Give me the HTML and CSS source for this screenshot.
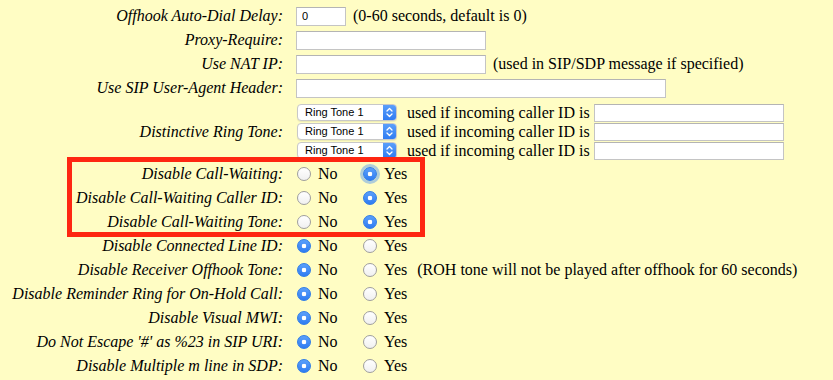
FILE: index.html
```html
<!DOCTYPE html>
<html>
<head>
<meta charset="utf-8">
<link rel="stylesheet" href="styles.css">
</head>
<body>
<div class="page">
  <div class="form">
    <div class="row">
      <div class="label">Offhook Auto-Dial Delay:</div>
      <div class="value"><input class="txt w50" type="text" value="0"><span class="note">(0-60 seconds, default is 0)</span></div>
    </div>
    <div class="row">
      <div class="label">Proxy-Require:</div>
      <div class="value"><input class="txt w190" type="text"></div>
    </div>
    <div class="row">
      <div class="label">Use NAT IP:</div>
      <div class="value"><input class="txt w190" type="text"><span class="note">(used in SIP/SDP message if specified)</span></div>
    </div>
    <div class="row">
      <div class="label">Use SIP User-Agent Header:</div>
      <div class="value"><input class="txt w370" type="text"></div>
    </div>
    <div class="row ring">
      <div class="label">Distinctive Ring Tone:</div>
      <div class="value stack">
        <div class="sub">
          <span class="select"><span class="sel-text">Ring Tone 1</span><span class="sel-btn"><svg width="7" height="11" viewBox="0 0 7 11"><path d="M1 4 L3.5 1.5 L6 4 M1 7 L3.5 9.5 L6 7" fill="none" stroke="#fff" stroke-width="1.3" stroke-linecap="round" stroke-linejoin="round"/></svg></span></span>
          <span class="cid">used if incoming caller ID is</span><input class="txt w190 short" type="text">
        </div>
        <div class="sub">
          <span class="select"><span class="sel-text">Ring Tone 1</span><span class="sel-btn"><svg width="7" height="11" viewBox="0 0 7 11"><path d="M1 4 L3.5 1.5 L6 4 M1 7 L3.5 9.5 L6 7" fill="none" stroke="#fff" stroke-width="1.3" stroke-linecap="round" stroke-linejoin="round"/></svg></span></span>
          <span class="cid">used if incoming caller ID is</span><input class="txt w190 short" type="text">
        </div>
        <div class="sub">
          <span class="select"><span class="sel-text">Ring Tone 1</span><span class="sel-btn"><svg width="7" height="11" viewBox="0 0 7 11"><path d="M1 4 L3.5 1.5 L6 4 M1 7 L3.5 9.5 L6 7" fill="none" stroke="#fff" stroke-width="1.3" stroke-linecap="round" stroke-linejoin="round"/></svg></span></span>
          <span class="cid">used if incoming caller ID is</span><input class="txt w190 short" type="text">
        </div>
      </div>
    </div>
    <div class="row radios-first">
      <div class="label">Disable Call-Waiting:</div>
      <div class="value"><label class="opt"><span class="radio"></span>No</label><label class="opt"><span class="radio on focus"></span>Yes</label></div>
    </div>
    <div class="row">
      <div class="label">Disable Call-Waiting Caller ID:</div>
      <div class="value"><label class="opt"><span class="radio"></span>No</label><label class="opt"><span class="radio on"></span>Yes</label></div>
    </div>
    <div class="row">
      <div class="label">Disable Call-Waiting Tone:</div>
      <div class="value"><label class="opt"><span class="radio"></span>No</label><label class="opt"><span class="radio on"></span>Yes</label></div>
    </div>
    <div class="row">
      <div class="label">Disable Connected Line ID:</div>
      <div class="value"><label class="opt"><span class="radio on"></span>No</label><label class="opt"><span class="radio"></span>Yes</label></div>
    </div>
    <div class="row">
      <div class="label">Disable Receiver Offhook Tone:</div>
      <div class="value"><label class="opt"><span class="radio on"></span>No</label><label class="opt"><span class="radio"></span>Yes</label><span class="note roh">(ROH tone will not be played after offhook for 60 seconds)</span></div>
    </div>
    <div class="row">
      <div class="label">Disable Reminder Ring for On-Hold Call:</div>
      <div class="value"><label class="opt"><span class="radio on"></span>No</label><label class="opt"><span class="radio"></span>Yes</label></div>
    </div>
    <div class="row">
      <div class="label">Disable Visual MWI:</div>
      <div class="value"><label class="opt"><span class="radio on"></span>No</label><label class="opt"><span class="radio"></span>Yes</label></div>
    </div>
    <div class="row">
      <div class="label">Do Not Escape '#' as %23 in SIP URI:</div>
      <div class="value"><label class="opt"><span class="radio on"></span>No</label><label class="opt"><span class="radio"></span>Yes</label></div>
    </div>
    <div class="row">
      <div class="label">Disable Multiple m line in SDP:</div>
      <div class="value"><label class="opt"><span class="radio on"></span>No</label><label class="opt"><span class="radio"></span>Yes</label></div>
    </div>
  </div>
  <div class="annot"></div>
</div>
</body>
</html>
```

FILE: styles.css
```css
html, body {
  margin: 0;
  padding: 0;
  background: #fffdc4;
}
body {
  font-family: "Liberation Serif", "Times New Roman", serif;
  font-size: 16px;
  color: #000;
}
.page {
  position: relative;
  width: 833px;
  height: 380px;
  overflow: hidden;
}
.form {
  padding-top: 4px;
  display: flex;
  flex-direction: column;
}
.row {
  display: grid;
  grid-template-columns: 283px 1fr;
  column-gap: 13px;
  height: 24px;
  align-items: center;
}
.label {
  font-style: italic;
  text-align: right;
  white-space: nowrap;
  line-height: 18px;
}
.value {
  display: flex;
  align-items: center;
  white-space: nowrap;
  line-height: 18px;
}
.txt {
  box-sizing: border-box;
  height: 19px;
  margin: 0;
  padding: 0 0 0 5px;
  border: 1px solid #c4c4c4;
  border-top-color: #b4b4b4;
  background: #fff;
  font-family: "Liberation Sans", Arial, sans-serif;
  font-size: 11px;
  color: #000;
  outline: none;
}
.txt.short { height: 18px; }
.w50 { width: 50px; }
.w190 { width: 190px; }
.w370 { width: 370px; }
.note { margin-left: 7px; }
.note.roh { margin-left: 10px; }

.ring {
  height: 57px;
  margin-top: 3px;
  margin-bottom: 2px;
}
.stack {
  flex-direction: column;
  align-items: flex-start;
}
.sub {
  height: 19px;
  display: flex;
  align-items: center;
}
.select {
  box-sizing: border-box;
  display: inline-flex;
  align-items: stretch;
  width: 100px;
  height: 17px;
  margin-left: 1px;
  border: 1px solid #c8c8c8;
  border-radius: 4px;
  background: #fff;
  box-shadow: 0 1px 1px rgba(0,0,0,0.08);
  overflow: hidden;
}
.sel-text {
  flex: 1;
  padding-left: 7px;
  font-family: "Liberation Sans", Arial, sans-serif;
  font-size: 11px;
  line-height: 15px;
}
.sel-btn {
  width: 13px;
  background: linear-gradient(#5b9ffa, #2f7cf2);
  display: flex;
  align-items: center;
  justify-content: center;
}
.cid { margin-left: 10px; margin-right: 4px; }

.opt {
  display: inline-flex;
  align-items: center;
  width: 66px;
}
.opt:last-of-type { width: auto; }
.radio {
  box-sizing: border-box;
  width: 14px;
  height: 14px;
  margin-left: 1px;
  margin-right: 7px;
  border-radius: 50%;
  border: 1px solid #9e9e9e;
  background: linear-gradient(#ffffff, #f0f0f0);
}
.radio.on {
  border-color: #2e7ce8;
  background: radial-gradient(circle, #fff 0 2px, transparent 2.6px), linear-gradient(#5ba0fa, #2f7cf2);
}
.radio.focus {
  box-shadow: 0 0 0 3px rgba(110, 165, 235, 0.55);
}

.annot {
  position: absolute;
  left: 67px;
  top: 157px;
  width: 358px;
  height: 80px;
  box-sizing: border-box;
  border: 5px solid #fe2611;
}
```
